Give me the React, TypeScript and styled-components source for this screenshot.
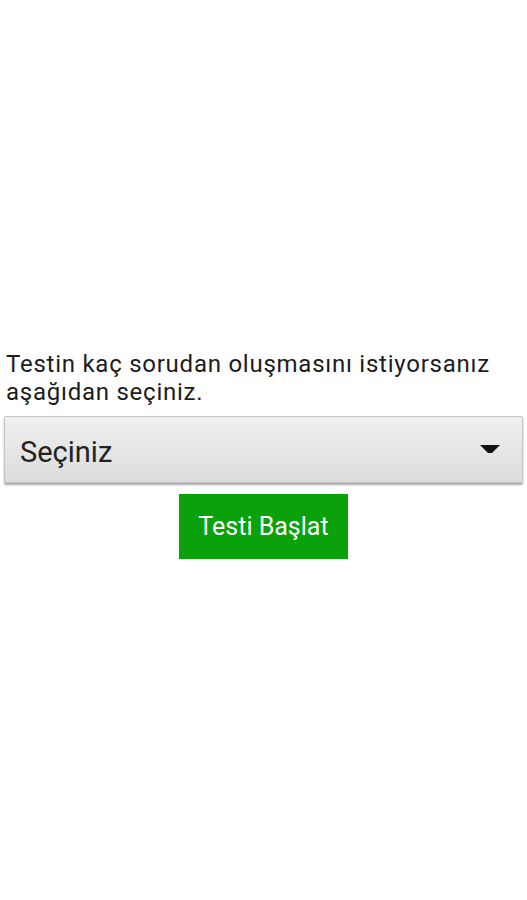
import React from "react";
import styled, { createGlobalStyle } from "styled-components";

const Global = createGlobalStyle`
  html, body { margin: 0; padding: 0; background: #ffffff; }
  body { font-family: Roboto, "Noto Sans", sans-serif; }
`;

const Screen = styled.div`
  width: 527px;
  height: 900px;
  display: flex;
  flex-direction: column;
  padding: 350px 4px 0 4px;
  box-sizing: border-box;
`;

const Label = styled.div`
  font-size: 24px;
  line-height: 28px;
  letter-spacing: 0.75px;
  color: #1c1c1c;
  padding-left: 2px;
  margin-bottom: 10px;
`;

const Spinner = styled.div`
  height: 67px;
  border: 1px solid #c4c4c4;
  border-radius: 2px;
  background: linear-gradient(#f0f0f0, #dcdcdc);
  box-shadow: 0 2px 2px rgba(0, 0, 0, 0.35);
  display: flex;
  align-items: center;
  justify-content: space-between;
  padding: 4px 22px 0 15px;
  box-sizing: border-box;
`;

const SpinnerText = styled.span`
  font-size: 29px;
  color: #222;
`;

const Caret = styled.svg`
  width: 20px;
  height: 9px;
  margin-top: -4px;
`;

const ButtonRow = styled.div`
  display: flex;
  justify-content: center;
  margin-top: 11px;
`;

const StartButton = styled.button`
  width: 169px;
  height: 65px;
  border: none;
  border-radius: 0;
  background: #0aa10a;
  color: #ffffff;
  font-family: Roboto, "Noto Sans", sans-serif;
  font-size: 25px;
  padding: 0;
`;

export default function App() {
  return (
    <>
      <Global />
      <Screen>
        <Label>
          Testin kaç sorudan oluşmasını istiyorsanız
          <br />
          aşağıdan seçiniz.
        </Label>
        <Spinner>
          <SpinnerText>Seçiniz</SpinnerText>
          <Caret viewBox="0 0 20 9">
            <path d="M0 0 H20 L12 8 H8 Z" fill="#111" />
          </Caret>
        </Spinner>
        <ButtonRow>
          <StartButton>Testi Başlat</StartButton>
        </ButtonRow>
      </Screen>
    </>
  );
}
